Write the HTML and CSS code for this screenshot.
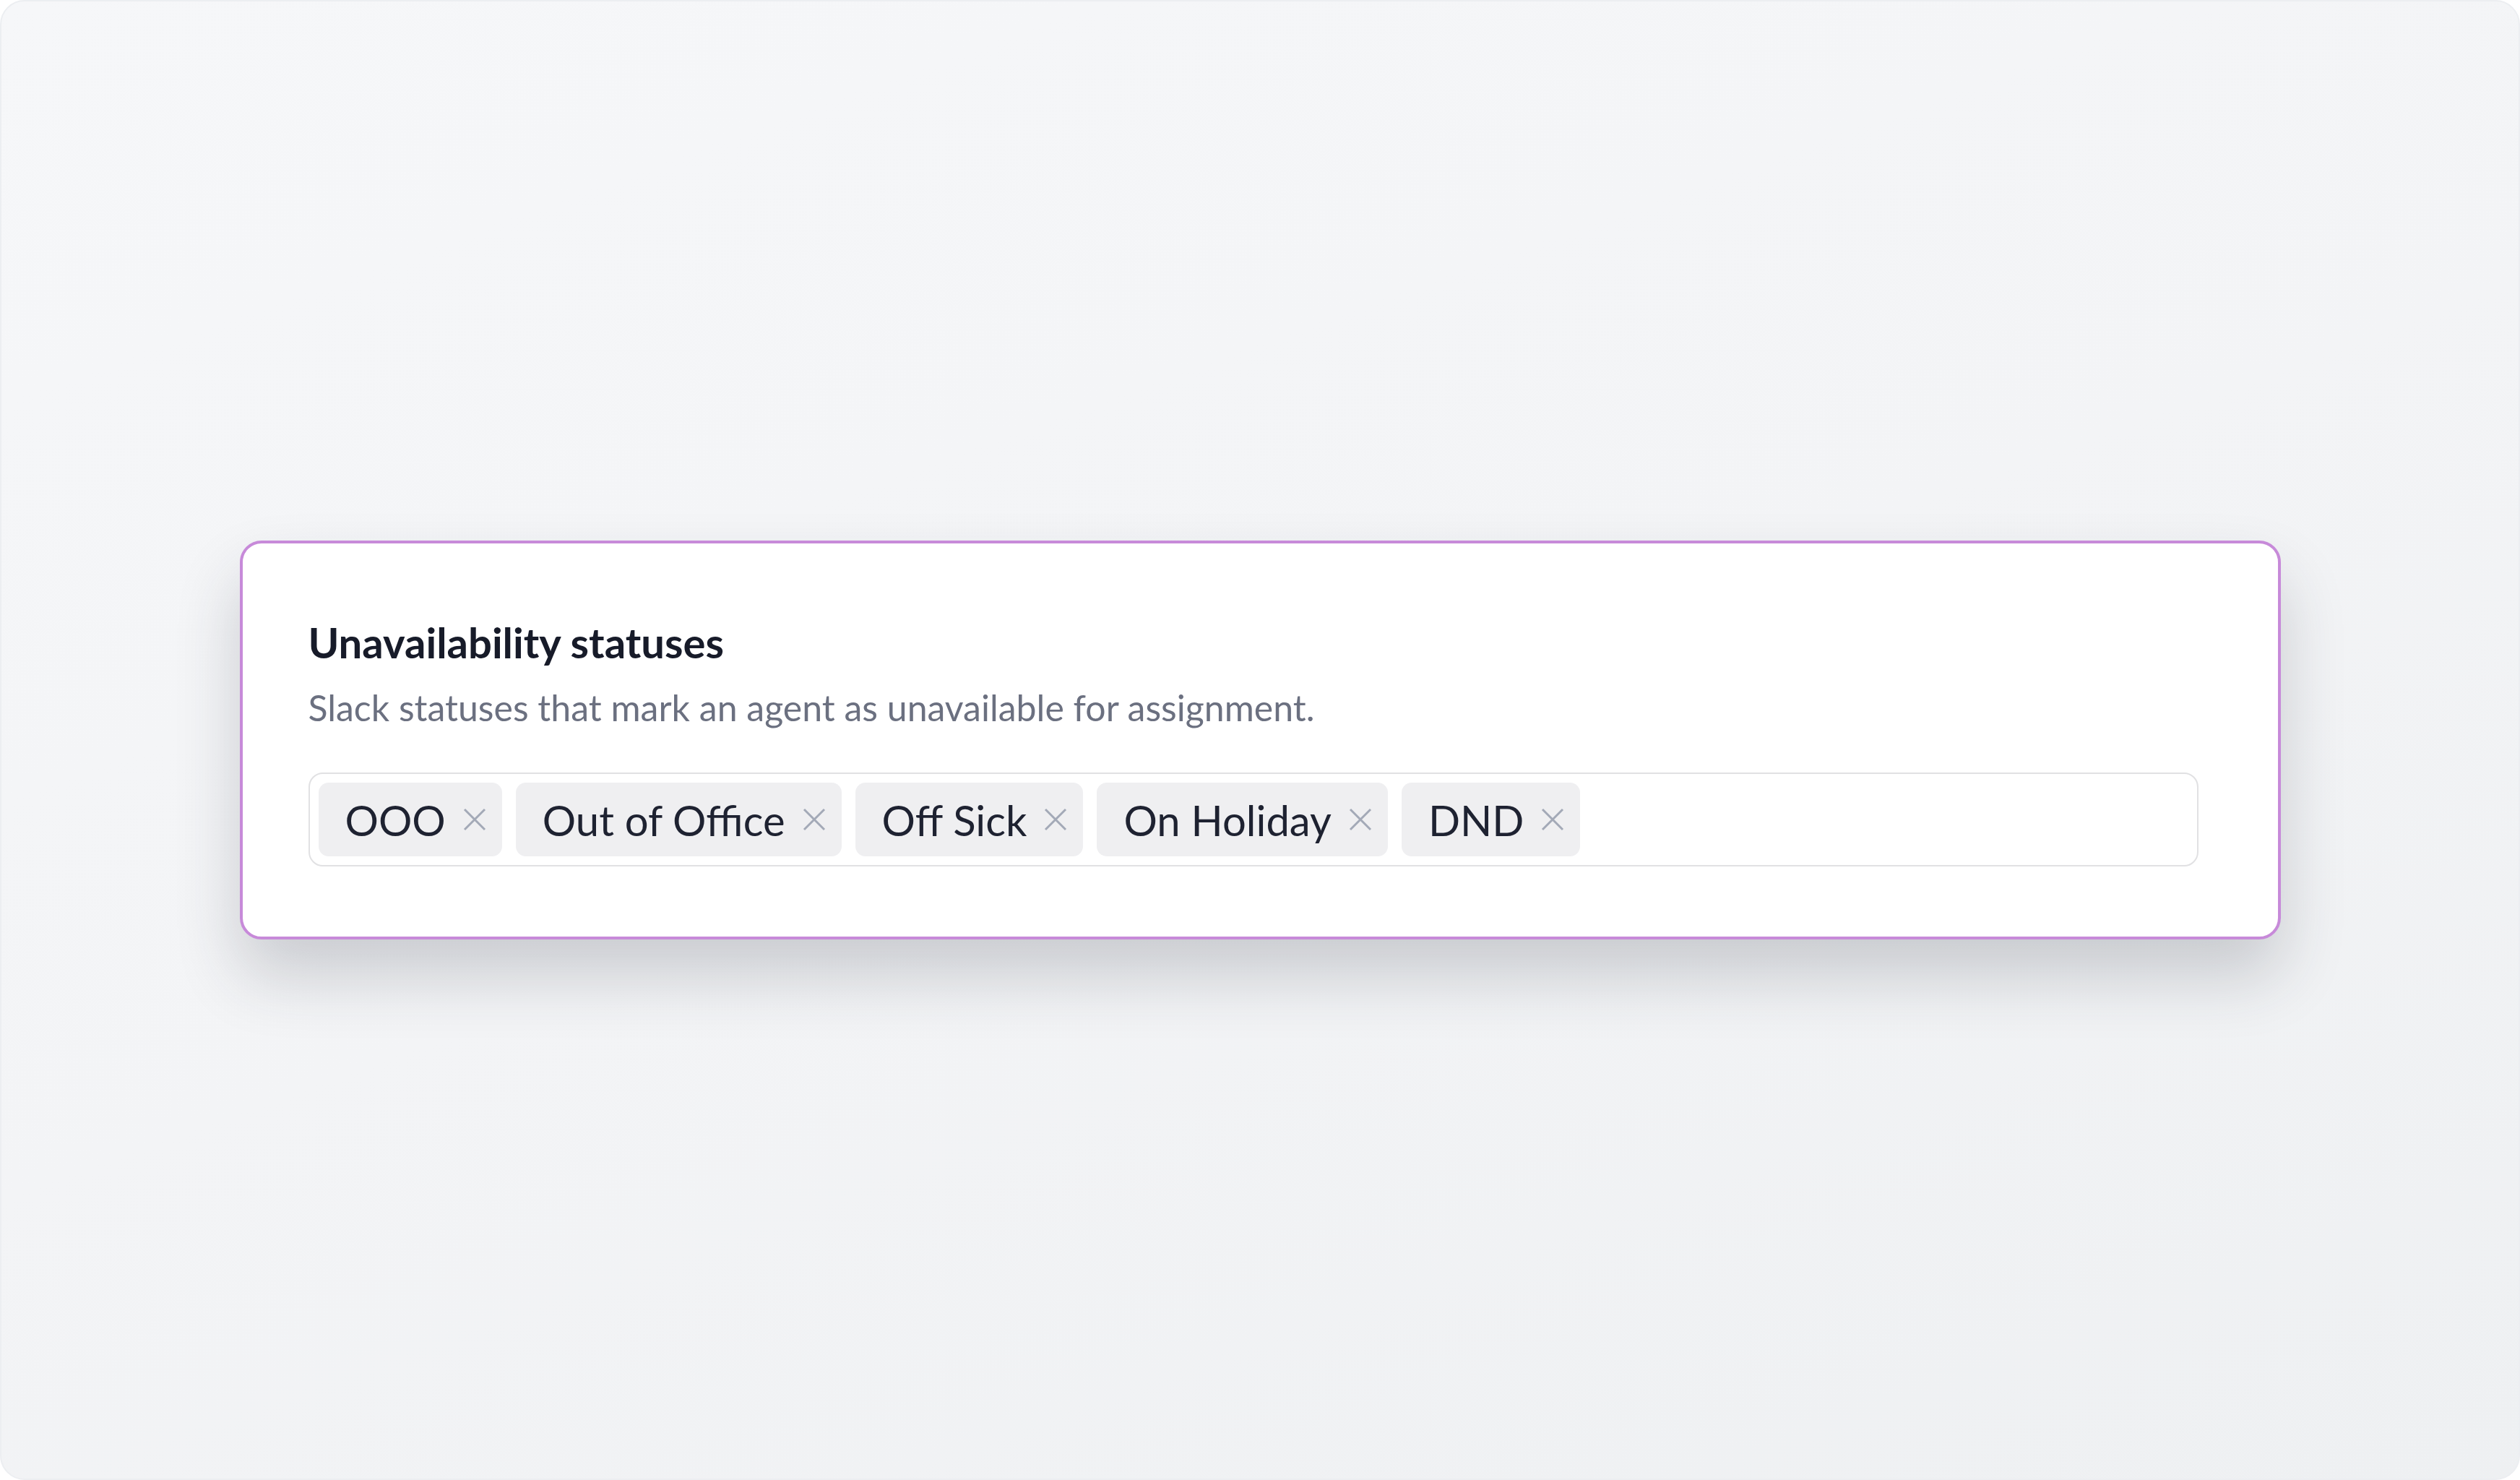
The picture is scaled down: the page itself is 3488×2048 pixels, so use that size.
FILE: index.html
```html
<!DOCTYPE html>
<html lang="en">
<head>
<meta charset="UTF-8">
<meta name="viewport" content="width=device-width, initial-scale=1.0">
<title>Unavailability statuses</title>
<link rel="stylesheet" href="styles.css">
</head>
<body>
<div class="frame">
  <section class="card">
    <h2 class="card-title">Unavailability statuses</h2>
    <p class="card-desc">Slack statuses that mark an agent as unavailable for assignment.</p>
    <div class="tag-input">
      <span class="tag">OOO
        <svg class="tag-x" viewBox="0 0 16 16"><path d="M1 1L15 15M15 1L1 15"/></svg>
      </span>
      <span class="tag">Out of Office
        <svg class="tag-x" viewBox="0 0 16 16"><path d="M1 1L15 15M15 1L1 15"/></svg>
      </span>
      <span class="tag">Off Sick
        <svg class="tag-x" viewBox="0 0 16 16"><path d="M1 1L15 15M15 1L1 15"/></svg>
      </span>
      <span class="tag">On Holiday
        <svg class="tag-x" viewBox="0 0 16 16"><path d="M1 1L15 15M15 1L1 15"/></svg>
      </span>
      <span class="tag">DND
        <svg class="tag-x" viewBox="0 0 16 16"><path d="M1 1L15 15M15 1L1 15"/></svg>
      </span>
    </div>
  </section>
</div>
</body>
</html>
```

FILE: styles.css
```css
/* page */
html,
body {
  margin: 0;
  height: 100%;
  background: #ffffff;
}

body {
  font-family: Lato, "Open Sans", sans-serif;
}

.frame {
  box-sizing: border-box;
  height: 100%;
  border: 2px solid #eceef1;
  border-radius: 34px;
  background: linear-gradient(160deg, #f6f7f9 0%, #f3f4f6 50%, #eef0f2 100%);
  display: flex;
  align-items: center;
  justify-content: center;
}

/* card */
.card {
  box-sizing: border-box;
  width: 2825px;
  height: 552px;
  padding: 105px 110px 0 91px;
  background: #ffffff;
  border: 4px solid #c78ad9;
  border-radius: 30px;
  box-shadow: 0 50px 90px rgba(40, 46, 60, 0.2);
}

.card-title {
  margin: 0;
  font-size: 58px;
  font-weight: 700;
  line-height: 64px;
  color: #171b29;
}

.card-desc {
  margin: 28px 0 0;
  font-size: 50px;
  line-height: 60px;
  color: #6b7080;
}

/* tags */
.tag-input {
  box-sizing: border-box;
  height: 130px;
  margin-top: 60px;
  padding: 10px 12px;
  display: flex;
  align-items: center;
  gap: 19px;
  border: 2px solid #e1e1e3;
  border-radius: 20px;
}

.tag {
  height: 102px;
  padding: 0 22px 0 37px;
  display: flex;
  align-items: center;
  gap: 24px;
  background: #efeff1;
  border-radius: 14px;
  font-size: 58px;
  color: #1e2231;
}

.tag-x {
  width: 32px;
  height: 32px;
  fill: none;
  stroke: #a3a9b7;
  stroke-width: 1.5;
}
```
